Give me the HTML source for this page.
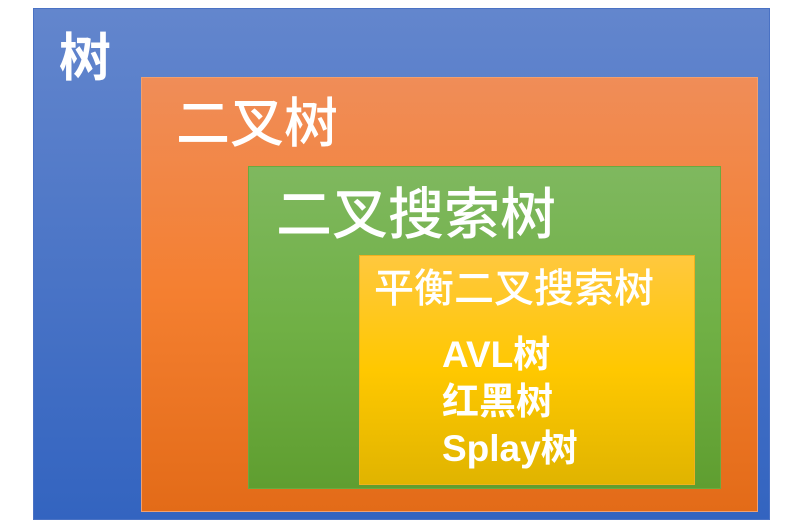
<!DOCTYPE html>
<html><head><meta charset="utf-8"><style>
body{margin:0;width:810px;height:532px;background:#fff;position:relative;overflow:hidden;font-family:"Liberation Sans","Noto Sans CJK SC",sans-serif;color:#fff;}
.b{position:absolute;box-sizing:border-box;}
.t{position:absolute;white-space:nowrap;line-height:1;}
</style></head><body>
<div class="b" style="left:33px;top:8px;width:737px;height:512px;background:linear-gradient(#6386cd,#3364c0);border:1px solid #4a72c4;"></div>
<div class="t" style="left:59px;top:33px;font-size:52px;font-weight:bold;">树</div>
<div class="b" style="left:141px;top:77px;width:617px;height:435px;background:linear-gradient(#f08d58,#f47f30 50%,#e36b18);border:1px solid #f0a070;"></div>
<div class="t" style="left:176px;top:97px;font-size:54px;font-weight:500;">二叉树</div>
<div class="b" style="left:248px;top:166px;width:473px;height:323px;background:linear-gradient(#7fb85f,#70b045 50%,#5f9e30);border:1px solid #6aaa40;"></div>
<div class="t" style="left:276px;top:187px;font-size:56px;font-weight:500;">二叉搜索树</div>
<div class="b" style="left:359px;top:255px;width:336px;height:230px;background:linear-gradient(#ffc83e,#ffc800 50%,#e0b400);border:1px solid #f0b020;"></div>
<div class="t" style="left:374px;top:269px;font-size:40px;font-weight:500;">平衡二叉搜索树</div>
<div class="t" style="left:442px;top:331px;font-size:37px;font-weight:bold;line-height:47px;">AVL树<br>红黑树<br>Splay树</div>
</body></html>
